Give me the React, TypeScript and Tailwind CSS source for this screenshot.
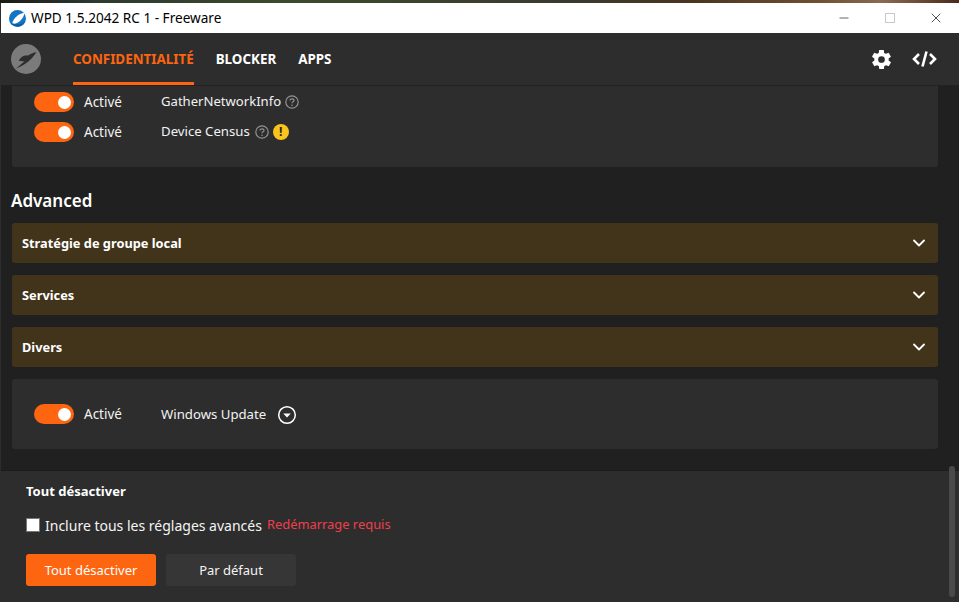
import React from "react";
import { ChevronDown, Minus, X } from "lucide-react";

function Toggle() {
  return (
    <div className="flex h-5 w-10 items-center justify-end rounded-full bg-[#fd6510] pr-[3px]">
      <div className="h-[13px] w-[13px] rounded-full bg-white" />
    </div>
  );
}

function Help() {
  return (
    <svg width="14" height="14" viewBox="0 0 14 14" fill="none" className="shrink-0">
      <circle cx="7" cy="7" r="6.2" stroke="#929292" strokeWidth="1.2" />
      <path d="M5 5.6c0-1.100.9-1.800 2-1.800s2 .7 2 1.700c0 1.300-2 1.400-2 2.700" stroke="#929292" strokeWidth="1.200" fill="none" />
      <circle cx="7" cy="10.300" r=".8" fill="#929292" />
    </svg>
  );
}

function Row({ children }: { children: React.ReactNode }) {
  return (
    <div className="flex h-5 items-center">
      <Toggle />
      <span className="ml-[10px] w-[77px] text-[13.5px] text-[#f2f2f2]">Activé</span>
      {children}
    </div>
  );
}

function Accordion({ label }: { label: string }) {
  return (
    <div className="flex h-10 items-center justify-between rounded-[3px] bg-[#42341a] pl-[10px] pr-[9px]">
      <span className="pt-[1px] text-[12.8px] font-bold text-white">{label}</span>
      <ChevronDown size={20} color="#ffffff" strokeWidth={2.2} />
    </div>
  );
}

export default function App() {
  return (
    <div className="relative h-[602px] w-[959px] overflow-hidden bg-[#2d2d2d] font-['Noto_Sans','Open_Sans',sans-serif]">
      <div className="h-[3px] bg-[linear-gradient(90deg,#1c1a16_0%,#2c3a30_10%,#3c4a2c_30%,#3a3a30_60%,#4a3520_72%,#6e4f30_85%,#8a6a50_92%,#4a2a1a_100%)]" />
      <div className="ml-px flex h-[30px] items-center bg-white text-black">
        <svg width="17" height="17" viewBox="0 0 16 16" className="ml-[8px] shrink-0">
          <circle cx="8" cy="8" r="8" fill="#1275c4" />
          <path d="M3 12.500C4 8 9 3 14.500 2.500C14 8 9 12.500 4.500 13Z" fill="#ffffff" />
          <path d="M1 12C3 14.500 6 15.500 8 15.500C11 15.500 13 14 15 11C11 14 5 14 1 12Z" fill="#0d5aa0" />
        </svg>
        <span className="ml-[5px] text-[13.6px] leading-none">WPD 1.5.2042 RC 1 - Freeware</span>
        <div className="ml-auto flex h-full items-center">
          <div className="flex w-[46px] justify-center"><Minus size={14} color="#111" strokeWidth={1.1} /></div>
          <div className="flex w-[46px] justify-center"><div className="h-[10px] w-[10px] border border-[#c8c8c8]" /></div>
          <div className="flex w-[46px] justify-center"><X size={16} color="#111" strokeWidth={1.1} /></div>
        </div>
      </div>
      <div className="ml-px flex h-[568px] flex-col">
        <header className="flex h-[53px] shrink-0 items-center border-b border-[#222] bg-[#2d2d2d] pl-[10px] pr-[22px]">
          <svg width="30" height="30" viewBox="0 0 30 30" className="shrink-0">
            <circle cx="15" cy="15" r="15" fill="#7b7b7b" />
            <path d="M8 17C9 13 13 11 17 11.500C20 9.500 23 8.500 25.500 8C22 14 15 21 5 24.500C8 22 11 19.500 13.500 17.500C11.500 16.800 9.500 16.800 8 17Z" fill="#2d2d2d" />
          </svg>
          <nav className="ml-[32px] flex h-full items-center gap-[22px] text-[13.4px] font-bold">
            <div className="flex h-full items-center border-b-[3px] border-[#fd6510] pt-[3px] text-[#fd6510]">CONFIDENTIALITÉ</div>
            <div className="text-white">BLOCKER</div>
            <div className="text-white">APPS</div>
          </nav>
          <div className="ml-auto flex items-center gap-[19px]">
            <svg width="23" height="23" viewBox="0 0 24 24" fill="#ffffff">
              <path fillRule="evenodd" d="M19.4 13c.1-.3.1-.7.1-1s0-.7-.1-1l2.100-1.600c.2-.2.3-.4.1-.7l-2-3.400c-.1-.2-.4-.3-.6-.2l-2.500 1c-.5-.4-1.100-.7-1.700-1L14.400 2.400c0-.2-.2-.4-.5-.4h-3.900c-.3 0-.5.2-.5.4L9.100 5.100c-.6.300-1.200.6-1.700 1l-2.500-1c-.2-.1-.5 0-.6.2l-2 3.400c-.1.300-.1.500.1.700L4.600 11c-.1.300-.1.700-.1 1s0 .7.1 1l-2.100 1.600c-.2.200-.3.400-.1.700l2 3.400c.1.200.4.300.6.200l2.500-1c.5.400 1.100.7 1.700 1l.4 2.700c0 .2.200.4.500.4h3.900c.3 0 .5-.2.500-.4l.4-2.700c.6-.3 1.200-.6 1.700-1l2.500 1c.2.100.5 0 .6-.2l2-3.400c.1-.3.100-.5-.1-.7ZM12 15.500a3.500 3.500 0 1 1 0-7 3.500 3.500 0 0 1 0 7Z" />
            </svg>
            <svg width="25" height="20" viewBox="0 0 25 20" fill="none" stroke="#ffffff" strokeWidth="2.600">
              <path d="M7 5L2 10L7 15M18 5L23 10L18 15M14.500 2.500L10.500 17.500" />
            </svg>
          </div>
        </header>
        <main className="h-[385px] shrink-0 overflow-hidden border-b border-[#1c1c1c] bg-[#202020] pl-[11px] pr-[21px]">
          <section className="flex h-[81px] flex-col gap-[10px] rounded-b-[3px] bg-[#2d2d2d] pl-[22px] pt-[6px]">
            <Row>
              <span className="text-[13.1px] text-[#f2f2f2]">GatherNetworkInfo</span>
              <span className="ml-[4px]"><Help /></span>
            </Row>
            <Row>
              <span className="text-[13.2px] text-[#f2f2f2]">Device Census</span>
              <span className="ml-[5px]"><Help /></span>
              <span className="ml-[4px] flex h-4 w-4 items-center justify-center rounded-full bg-[#f9c51c] text-[12px] font-bold leading-none text-[#222]">!</span>
            </Row>
          </section>
          <h2 className="-ml-px mb-[9px] mt-[20px] h-[27px] text-[17px] font-semibold leading-[27px] text-white">Advanced</h2>
          <div className="flex flex-col gap-3">
            <Accordion label="Stratégie de groupe local" />
            <Accordion label="Services" />
            <Accordion label="Divers" />
          </div>
          <section className="mt-3 flex h-[70px] rounded-[3px] bg-[#2d2d2d] pl-[22px] pt-[25px]">
            <Row>
              <span className="pt-[2px] text-[13.2px] text-[#f2f2f2]">Windows Update</span>
              <svg width="20" height="20" viewBox="0 0 20 20" className="ml-[11px] mt-[2px]" fill="none">
                <circle cx="10" cy="10" r="8.300" stroke="#fff" strokeWidth="1.500" />
                <path d="M6.200 8.500H13.800L10 12.500Z" fill="#fff" />
              </svg>
            </Row>
          </section>
        </main>
        <footer className="flex-1 bg-[#2d2d2d] pl-[25px] pt-[10px]">
          <div className="h-5 text-[13px] font-bold leading-5 text-white">Tout désactiver</div>
          <div className="mt-[14px] flex h-5 items-center">
            <div className="h-[14px] w-[14px] border border-[#777] bg-white" />
            <span className="ml-[5px] text-[14px] text-[#f4f4f4]">Inclure tous les réglages avancés</span>
            <span className="ml-[5px] text-[12.9px] text-[#ee3f4c]">Redémarrage requis</span>
          </div>
          <div className="mt-[19px] flex gap-[10px]">
            <button className="h-8 w-[130px] rounded-[3px] bg-[#fd6510] pt-[1px] text-[13px] text-white">Tout désactiver</button>
            <button className="h-8 w-[130px] rounded-[3px] bg-[#363636] pt-[1px] text-[13px] text-[#f4f4f4]">Par défaut</button>
          </div>
        </footer>
      </div>
      <div className="absolute left-[949px] top-[466px] h-[131px] w-[6px] rounded-full bg-[#4a4a4a]" />
    </div>
  );
}
